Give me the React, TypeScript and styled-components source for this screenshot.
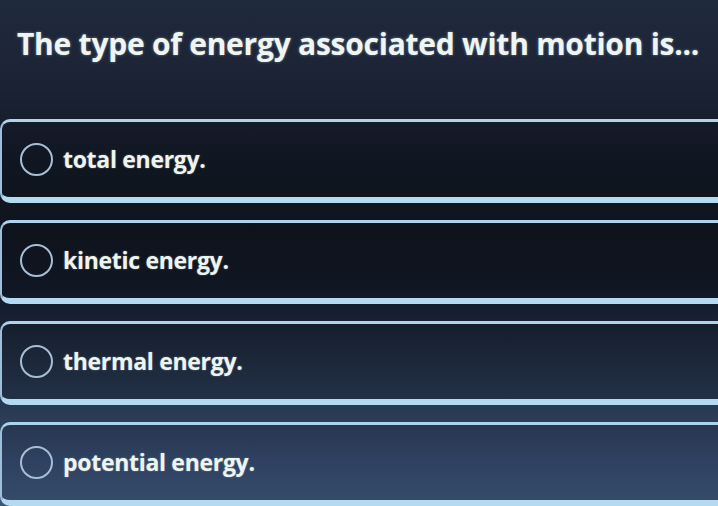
import React from "react";
import styled, { createGlobalStyle } from "styled-components";

const Global = createGlobalStyle`
  html, body {
    margin: 0;
    padding: 0;
    width: 718px;
    height: 506px;
    overflow: hidden;
  }
  body {
    background: linear-gradient(
      180deg,
      #202a3d 0px,
      #1b2234 90px,
      #131a26 150px,
      #0f141d 230px,
      #121a27 290px,
      #1b2638 340px,
      #27374f 400px,
      #34496b 460px,
      #3d5678 506px
    );
    font-family: "Open Sans", "Lato", "Liberation Sans", sans-serif;
  }
`;

const Page = styled.main`
  width: 718px;
  height: 506px;
  overflow: hidden;
  display: flex;
  flex-direction: column;
`;

const Title = styled.h1`
  margin: 0;
  padding: 24px 0 0 17px;
  height: 119px;
  box-sizing: border-box;
  font-size: 30px;
  line-height: 40px;
  font-weight: 700;
  color: #eef5f2;
  letter-spacing: -0.25px;
  text-shadow: 0 0 3px rgba(220, 240, 240, 0.45);
  white-space: nowrap;
`;

const Options = styled.div`
  display: flex;
  flex-direction: column;
  gap: 17px;
`;

const Option = styled.div`
  box-sizing: border-box;
  height: 84px;
  margin-right: -30px;
  display: flex;
  align-items: center;
  gap: 10px;
  padding-left: 18px;
  border-top: 3px solid #aed3ec;
  border-left: 2px solid #9cc0dc;
  border-bottom: 6px solid #b4daf2;
  border-radius: 10px 0 0 10px;
  background: rgba(6, 10, 18, 0.12);
`;

const Radio = styled.span`
  box-sizing: border-box;
  width: 33px;
  height: 33px;
  border-radius: 50%;
  border: 2px solid #a6bfd6;
  flex: none;
`;

const Label = styled.span`
  font-size: 23px;
  font-weight: 700;
  color: #eef4f0;
  letter-spacing: -0.3px;
  text-shadow: 0 0 2px rgba(220, 240, 240, 0.4);
  margin-top: -2px;
`;

const choices = ["total energy.", "kinetic energy.", "thermal energy.", "potential energy."];

export default function App() {
  return (
    <Page>
      <Global />
      <Title>The type of energy associated with motion is...</Title>
      <Options>
        {choices.map((c) => (
          <Option key={c}>
            <Radio />
            <Label>{c}</Label>
          </Option>
        ))}
      </Options>
    </Page>
  );
}
